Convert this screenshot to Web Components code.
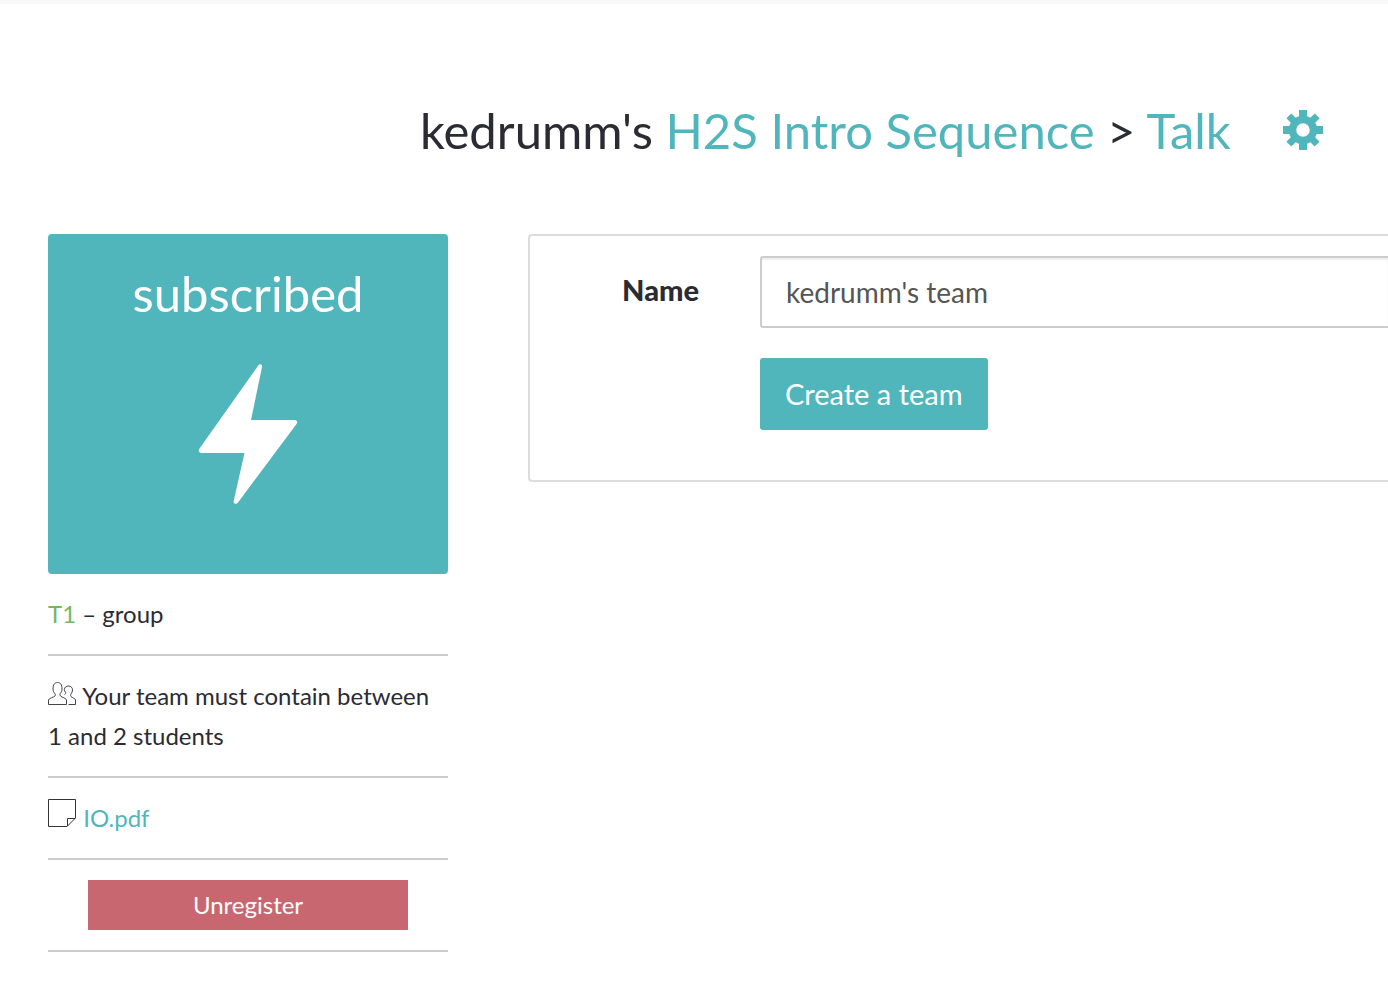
<!DOCTYPE html>
<html lang="en">
<head>
<meta charset="utf-8">
<meta name="viewport" content="width=device-width, initial-scale=1">
<title>Talk</title>
<style>
  body {
    margin: 0;
    background: #fff;
    color: #2b2b33;
    font-family: Lato, "Open Sans", sans-serif;
    font-size: 24px;
    line-height: 40px;
    --accent: #51b6bb;
    --danger: #c96770;
    --rule: #ccc;
  }
</style>
</head>
<body>
<activity-page></activity-page>
<script>
  const define = (name, html) => customElements.define(name, class extends HTMLElement {
    constructor() {
      super();
      const template = document.createElement('template');
      template.innerHTML = html;
      this.attachShadow({ mode: 'open' }).append(template.content.cloneNode(true));
    }
  });

  define('page-heading', `
    <style>
      :host { display: block; padding: 89px 0 67px 420px; }
      .bar { display: flex; align-items: center; gap: 52px; }
      h1 { margin: 0; font-size: 49px; line-height: 74px; font-weight: 400; white-space: nowrap; }
      a { color: var(--accent); text-decoration: none; }
      .settings { display: flex; }
    </style>
    <div class="bar">
      <h1>kedrumm's <a href="#sequence">H2S Intro Sequence</a> &gt; <a href="#talk">Talk</a></h1>
      <a class="settings" href="#settings" aria-label="Settings">
        <svg width="40" height="40" viewBox="-20 -20 40 40" fill="currentColor" aria-hidden="true">
          <circle r="10.500" fill="none" stroke="currentColor" stroke-width="7.500"/>
          <path d="M-4-20h8v8h-8zM-4 12h8v8h-8zM-20-4h8v8h-8zM12-4h8v8h-8z"/>
          <path transform="rotate(45)" d="M-3.500-20h7v9h-7zM-3.500 11h7v9h-7zM-20-3.500h9v7h-9zM11-3.500h9v7h-9z"/>
        </svg>
      </a>
    </div>`);

  define('status-card', `
    <style>
      :host { display: flex; flex-direction: column; align-items: center; box-sizing: border-box;
        height: 340px; padding-top: 22px; border-radius: 4px; background: var(--accent); color: #fff; }
      h2 { margin: 0 0 34px; font-size: 49px; line-height: 74px; font-weight: 400; }
    </style>
    <h2><slot></slot></h2>
    <svg width="100" height="140" viewBox="0 0 100 140" fill="#fff" aria-hidden="true">
      <path d="M60.500 1.200Q62 -.5 63.500 .8Q64.300 1.500 64 3L53 56H97Q100.500 57 98.500 60L40 138.500Q38.500 140.500 36.500 139.500Q35.300 138.800 35.700 137L46.500 89H3Q-.5 88 1.200 85Z"/>
    </svg>`);

  define('info-row', `
    <style>
      :host { display: block; padding: 20px 0; border-bottom: 2px solid var(--rule); }
    </style>
    <slot></slot>`);

  define('people-icon', `
    <style>:host { display: inline-block; width: 28px; height: 23px; } svg { display: block; }</style>
    <svg width="28" height="23" viewBox="0 0 28 23" fill="none" stroke="#44444b" aria-hidden="true">
      <path d="M.5 22.500v-4.500c.5-2 5-2.500 6.500-4 .6-1 .3-2-.5-3-.8-.9-1.500-2-1.500-4C5 2.500 6.500.5 9.500.5S14 2.500 14 7c0 2-.7 3-1.500 4-.7 1-.8 2 0 3 1.500 1.500 5.500 2 6 4v4.500z"/>
      <path d="M16.500 12.500c1.500-1 1.600-1.500.8-2.500-.6-.7-1-1.500-1-2.500 0-2 2-3.500 4.200-3.500s4 1.500 4 4c0 1.500-.5 2.500-1.200 3.500-.8 1-.9 2-.3 3 1 1.500 4.300 1.500 4.500 3.500v4.500h-7"/>
    </svg>`);

  define('file-icon', `
    <style>:host { display: inline-block; width: 28px; height: 28px; } svg { display: block; }</style>
    <svg width="28" height="28" viewBox="0 0 28 28" fill="none" stroke="#333338" aria-hidden="true">
      <path d="M.5 .5h27v18.500l-8.500 8.500H.5zM19.500 27v-7.500H27"/>
    </svg>`);

  define('activity-summary', `
    <style>
      :host { display: block; }
      a { color: var(--accent); text-decoration: none; }
      .level { color: #73b760; }
      people-icon, file-icon { margin-right: 1px; }
      button { display: block; box-sizing: border-box; width: 80%; height: 50px; margin: 0 auto; padding: 0;
        border: 0; background: var(--danger); color: #fff; font: inherit; }
    </style>
    <status-card>subscribed</status-card>
    <info-row><span class="level">T1</span> – group</info-row>
    <info-row><people-icon></people-icon> Your team must contain between 1 and 2 students</info-row>
    <info-row><file-icon></file-icon> <a href="#file">IO.pdf</a></info-row>
    <info-row><button type="button">Unregister</button></info-row>`);

  define('team-form', `
    <style>
      :host { display: block; border: 2px solid #ddd; border-right: 0; border-radius: 4px 0 0 4px; }
      form { display: grid; grid-template-columns: 169px 1fr; column-gap: 61px; row-gap: 30px;
        padding: 20px 0 50px; font-size: 28px; }
      label { padding-top: 14px; text-align: right; font-size: 29px; font-weight: 900; }
      input { box-sizing: border-box; width: 100%; height: 72px; padding: 0 24px; border: 2px solid var(--rule);
        border-right: 0; border-radius: 3px 0 0 3px; background: #fff; color: #555; font: inherit;
        box-shadow: inset 0 2px 2px #0001; outline: 0; }
      button { grid-column: 2; justify-self: start; box-sizing: border-box; height: 72px; padding: 0 25px;
        border: 0; border-radius: 3px; background: var(--accent); color: #fff; font: inherit; font-size: 29px; }
    </style>
    <form>
      <label for="name">Name</label>
      <input id="name" type="text" value="kedrumm's team">
      <button type="button">Create a team</button>
    </form>`);

  define('activity-page', `
    <style>
      :host { display: block; border-top: 4px solid #f8f8f8; }
      main { display: grid; grid-template-columns: 400px minmax(0, 1fr); column-gap: 80px;
        align-items: start; padding: 0 0 46px 48px; }
    </style>
    <page-heading></page-heading>
    <main>
      <activity-summary></activity-summary>
      <team-form></team-form>
    </main>`);
</script>
</body>
</html>
